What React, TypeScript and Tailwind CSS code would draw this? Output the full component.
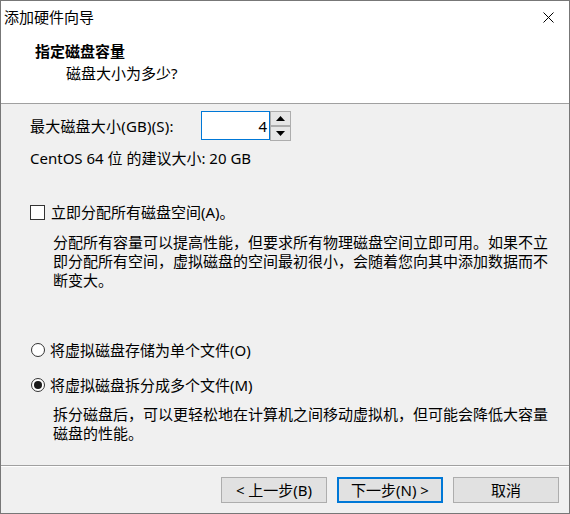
import React from "react";

const font = "font-['Noto_Sans','Noto_Sans_CJK_SC',sans-serif]";

function Radio({ checked }: { checked?: boolean }) {
  return (
    <span className="w-[14px] h-[14px] rounded-full border border-[#333] bg-white flex items-center justify-center shrink-0">
      {checked && <span className="w-[8px] h-[8px] rounded-full bg-[#1a1a1a]" />}
    </span>
  );
}

function Button({ label, focused }: { label: string; focused?: boolean }) {
  return (
    <button
      className={
        "w-[106px] h-[26px] bg-[#e1e1e1] text-[15px] leading-[20px] text-black flex items-center justify-center " +
        (focused ? "border-2 border-[#0078d7]" : "border border-[#adadad]")
      }
    >
      {label}
    </button>
  );
}

export default function App() {
  return (
    <div className={`w-[570px] h-[514px] border border-[#777] bg-[#f0f0f0] flex flex-col text-black ${font}`}>
      {/* title bar */}
      <div className="h-[31px] bg-white flex items-center justify-between pl-[3px] pr-[15px] pt-[1px]">
        <span className="text-[15px] leading-[20px]">添加硬件向导</span>
        <svg width="11" height="11" viewBox="0 0 11 11">
          <path d="M0.5 0.5 L10.5 10.5 M10.5 0.5 L0.5 10.5" stroke="#000" strokeWidth="1" />
        </svg>
      </div>

      {/* header */}
      <div className="h-[72px] bg-white pl-[34px] pt-[9px] border-b border-[#a0a0a0]">
        <div className="text-[15px] leading-[20px] font-bold">指定磁盘容量</div>
        <div className="text-[15px] leading-[20px] mt-[2px] pl-[31px]">磁盘大小为多少?</div>
      </div>

      {/* body */}
      <div className="flex-1 pl-[29px] text-[15px]">
        <div className="mt-[7px] h-[29px] flex items-center">
          <span className="w-[171px] leading-[20px] tracking-[0.2px]">最大磁盘大小(GB)(S):</span>
          <div className="w-[69px] h-[29px] bg-white border border-[#0078d7] flex items-center justify-end pr-[2px] leading-[20px]">
            4
          </div>
          <div className="flex flex-col">
            <div className="w-[21px] h-[15px] bg-[#e6e6e6] border border-[#adadad] flex items-center justify-center">
              <svg width="9" height="5" viewBox="0 0 9 5">
                <path d="M0 5 L4.5 0 L9 5 Z" fill="#000" />
              </svg>
            </div>
            <div className="w-[21px] h-[15px] bg-[#e6e6e6] border border-[#adadad] flex items-center justify-center">
              <svg width="9" height="5" viewBox="0 0 9 5">
                <path d="M0 0 L9 0 L4.5 5 Z" fill="#000" />
              </svg>
            </div>
          </div>
        </div>

        <div className="mt-[8px] leading-[20px]">CentOS 64 位 的建议大小: 20 GB</div>

        <div className="mt-[34px] h-[20px] flex items-center gap-[6px]">
          <span className="w-[15px] h-[15px] border border-[#333] bg-white shrink-0" />
          <span className="leading-[20px]">立即分配所有磁盘空间(A)。</span>
        </div>

        <div className="mt-[11px] ml-[23px] leading-[19px] whitespace-nowrap">
          分配所有容量可以提高性能，但要求所有物理磁盘空间立即可用。如果不立
          <br />
          即分配所有空间，虚拟磁盘的空间最初很小，会随着您向其中添加数据而不
          <br />
          断变大。
        </div>

        <div className="mt-[50px] h-[20px] flex items-center gap-[5px] pl-[1px]">
          <Radio />
          <span className="leading-[20px]">将虚拟磁盘存储为单个文件(O)</span>
        </div>

        <div className="mt-[15px] h-[20px] flex items-center gap-[5px] pl-[1px]">
          <Radio checked />
          <span className="leading-[20px]">将虚拟磁盘拆分成多个文件(M)</span>
        </div>

        <div className="mt-[10px] ml-[23px] leading-[19px] whitespace-nowrap">
          拆分磁盘后，可以更轻松地在计算机之间移动虚拟机，但可能会降低大容量
          <br />
          磁盘的性能。
        </div>
      </div>

      {/* footer */}
      <div className="h-[48px] border-t border-[#a0a0a0]">
        <div className="h-[1px] bg-white" />
        <div className="mt-[10px] flex justify-end gap-[10px] pr-[10px]">
          <Button label="< 上一步(B)" />
          <Button label="下一步(N) >" focused />
          <Button label="取消" />
        </div>
      </div>
    </div>
  );
}
